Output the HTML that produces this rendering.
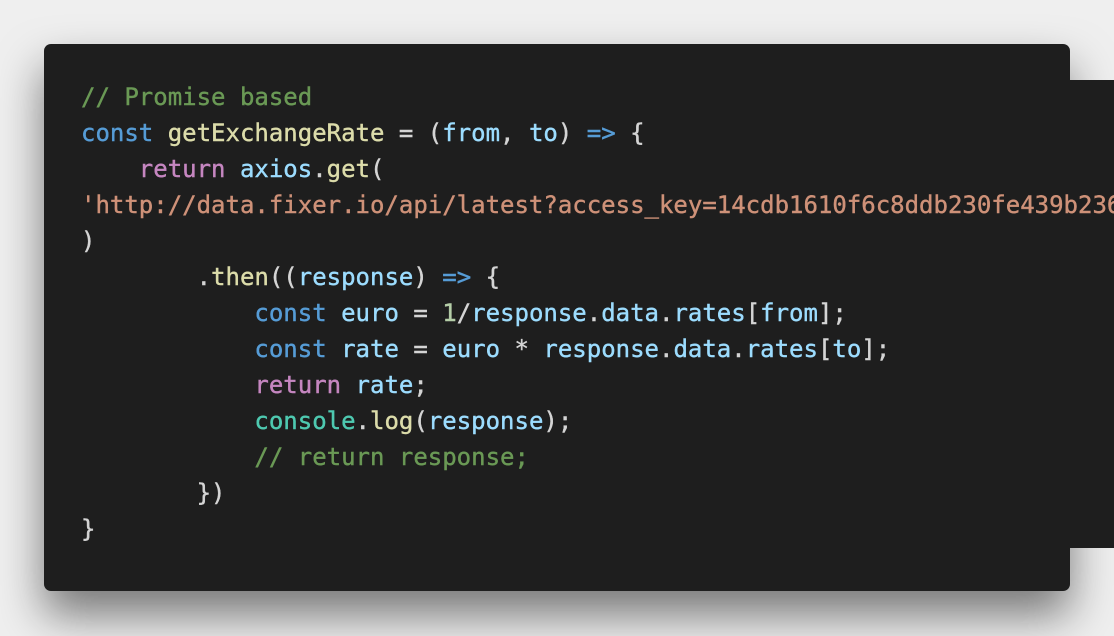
<!DOCTYPE html>
<html><head><meta charset="utf-8"><style>
html,body{margin:0;padding:0;width:1114px;height:636px;overflow:hidden;background:#efefef;}
.box{position:absolute;left:44px;top:44px;width:1026px;height:547px;background:#1e1e1e;border-radius:7px;box-shadow:0 24px 45px rgba(0,0,0,0.5);}
.ext{position:absolute;left:1060px;top:80px;width:60px;height:468px;background:#1e1e1e;}
pre{position:absolute;left:81px;top:79px;margin:0;font-family:"DejaVu Sans Mono","Liberation Mono",monospace;font-size:24px;line-height:36px;color:#d4d4d4;white-space:pre;-webkit-text-stroke:0.4px currentColor;}
.c{color:#6a9955}.k{color:#569cd6}.f{color:#dcdcaa}.p{color:#c586c0}.v{color:#9cdcfe}.s{color:#ce9178}.n{color:#b5cea8}.t{color:#4ec9b0}
</style></head><body>
<div class="box"></div><div class="ext"></div>
<pre><span class="c">// Promise based</span>
<span class="k">const</span> <span class="f">getExchangeRate</span> = (<span class="v">from</span>, <span class="v">to</span>) <span class="k">=&gt;</span> {
    <span class="p">return</span> <span class="v">axios</span>.<span class="f">get</span>(
<span class="s">'http://data.fixer.io/api/latest?access_key=14cdb1610f6c8ddb230fe439b236</span>
)
        .<span class="f">then</span>((<span class="v">response</span>) <span class="k">=&gt;</span> {
            <span class="k">const</span> <span class="v">euro</span> = <span class="n">1</span>/<span class="v">response</span>.<span class="v">data</span>.<span class="v">rates</span>[<span class="v">from</span>];
            <span class="k">const</span> <span class="v">rate</span> = <span class="v">euro</span> * <span class="v">response</span>.<span class="v">data</span>.<span class="v">rates</span>[<span class="v">to</span>];
            <span class="p">return</span> <span class="v">rate</span>;
            <span class="t">console</span>.<span class="f">log</span>(<span class="v">response</span>);
            <span class="c">// return response;</span>
        })
}</pre>
</body></html>
